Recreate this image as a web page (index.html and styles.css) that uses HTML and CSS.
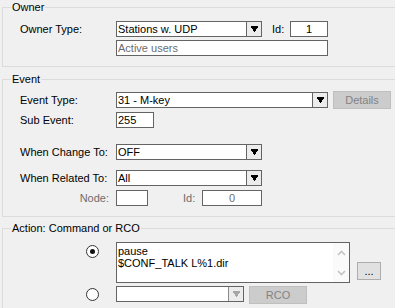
FILE: index.html
```html
<!DOCTYPE html>
<html>
<head>
<meta charset="utf-8">
<link rel="stylesheet" href="styles.css">
</head>
<body>
<div class="page">
  <div class="group owner">
    <span class="legend">Owner</span>
    <div class="row">
      <span class="lbl">Owner Type:</span>
      <div class="combo w146"><span class="val">Stations w. UDP</span><span class="btn"><svg width="7" height="6" viewBox="0 0 7 6"><path d="M0 0h7v2h-1v1h-1v2h-1v1h-1v-1h-1v-2h-1v-1h-1z" fill="#000"/></svg></span></div>
      <span class="idlbl">Id:</span>
      <div class="box w38 center">1</div>
    </div>
    <div class="row mt3">
      <span class="lbl"></span>
      <div class="box w212 grey">Active users</div>
    </div>
  </div>

  <div class="group event">
    <span class="legend">Event</span>
    <div class="row">
      <span class="lbl">Event Type:</span>
      <div class="combo w212"><span class="val">31 - M-key</span><span class="btn"><svg width="7" height="6" viewBox="0 0 7 6"><path d="M0 0h7v2h-1v1h-1v2h-1v1h-1v-1h-1v-2h-1v-1h-1z" fill="#000"/></svg></span></div>
      <div class="button disabled details">Details</div>
    </div>
    <div class="row mt4">
      <span class="lbl">Sub Event:</span>
      <div class="box w38">255</div>
    </div>
    <div class="row mt16">
      <span class="lbl">When Change To:</span>
      <div class="combo w146"><span class="val">OFF</span><span class="btn"><svg width="7" height="6" viewBox="0 0 7 6"><path d="M0 0h7v2h-1v1h-1v2h-1v1h-1v-1h-1v-2h-1v-1h-1z" fill="#000"/></svg></span></div>
    </div>
    <div class="row mt10">
      <span class="lbl">When Related To:</span>
      <div class="combo w146"><span class="val">All</span><span class="btn"><svg width="7" height="6" viewBox="0 0 7 6"><path d="M0 0h7v2h-1v1h-1v2h-1v1h-1v-1h-1v-2h-1v-1h-1z" fill="#000"/></svg></span></div>
    </div>
    <div class="row mt4">
      <span class="lbl right grey">Node:</span>
      <div class="box w32"></div>
      <span class="idlbl2 grey">Id:</span>
      <div class="box w60 center grey">0</div>
    </div>
  </div>

  <div class="group action">
    <span class="legend">Action: Command or RCO</span>
    <div class="arow">
      <span class="radio checked"></span>
      <div class="memo">
        <div class="memotext">pause<br>$CONF_TALK L%1.dir</div>
        <div class="scroll">
          <svg width="9" height="6" viewBox="0 0 9 6"><path d="M1 5L4.5 1.5L8 5" fill="none" stroke="#c4c4c4" stroke-width="1.6"/></svg>
          <svg width="9" height="6" viewBox="0 0 9 6"><path d="M1 1L4.5 4.5L8 1" fill="none" stroke="#c4c4c4" stroke-width="1.6"/></svg>
        </div>
      </div>
      <div class="button dots">...</div>
    </div>
    <div class="arow mt3">
      <span class="radio r2"></span>
      <div class="combo w128 dis"><span class="val"></span><span class="btn"><svg width="7" height="6" viewBox="0 0 7 6"><path d="M0 0h7v2h-1v1h-1v2h-1v1h-1v-1h-1v-2h-1v-1h-1z" fill="#a6a6a6"/></svg></span></div>
      <div class="button disabled rco">RCO</div>
    </div>
  </div>
</div>
</body>
</html>
```

FILE: styles.css
```css
html, body {
  margin: 0;
  padding: 0;
  background: #f0f0f0;
}
body {
  width: 395px;
  height: 308px;
  overflow: hidden;
  font-family: "Liberation Sans", Arial, sans-serif;
  font-size: 11px;
  line-height: 13px;
  color: #000;
}
.page {
  display: flex;
  flex-direction: column;
}
.group {
  position: relative;
  margin-left: 2px;
  width: 393px;
  box-sizing: border-box;
  border: 1px solid #dcdcdc;
  border-right: none;
}
.legend {
  position: absolute;
  top: -7px;
  left: 8px;
  padding: 0 1px;
  background: #f0f0f0;
  white-space: nowrap;
}
.owner {
  margin-top: 7px;
  padding: 13px 0 10px 0;
}
.event {
  margin-top: 12px;
  padding: 12px 0 10px 0;
}
.action {
  margin-top: 11px;
  padding: 13px 0 5px 0;
  border-bottom: none;
}
.row {
  display: flex;
  align-items: center;
  height: 16px;
  padding-left: 17px;
}
.arow {
  display: flex;
  align-items: flex-start;
  padding-left: 83px;
}
.mt3 { margin-top: 3px; }
.mt4 { margin-top: 4px; }
.mt10 { margin-top: 10px; }
.mt16 { margin-top: 16px; }
.lbl {
  width: 96px;
  flex: none;
  white-space: nowrap;
}
.lbl.right {
  text-align: right;
  padding-right: 7px;
  box-sizing: border-box;
}
.grey { color: #6d6d6d; }
.combo {
  display: flex;
  box-sizing: border-box;
  height: 16px;
  border: 1px solid #646464;
  background: #fff;
  flex: none;
}
.combo .val {
  flex: 1;
  padding-left: 1px;
  line-height: 14px;
  white-space: nowrap;
  overflow: hidden;
}
.combo .btn {
  width: 15px;
  box-sizing: border-box;
  border-left: 1px solid #646464;
  background: #ececec;
  display: flex;
  align-items: center;
  justify-content: center;
}
.combo .btn svg { display: block; }
.combo.dis .btn { border-left-color: #8a8a8a; }
.w128 { width: 128px; }
.w146 { width: 146px; }
.w212 { width: 212px; }
.w38 { width: 38px; }
.w32 { width: 32px; }
.w60 { width: 60px; }
.box {
  box-sizing: border-box;
  height: 16px;
  border: 1px solid #646464;
  background: #fff;
  padding-left: 1px;
  line-height: 14px;
  flex: none;
  white-space: nowrap;
}
.box.center {
  text-align: center;
  padding-left: 0;
}
.idlbl {
  margin-left: 10px;
  width: 18px;
  flex: none;
}
.idlbl2 {
  margin-left: 35px;
  width: 19px;
  flex: none;
}
.button {
  box-sizing: border-box;
  border: 1px solid #adadad;
  background: #e1e1e1;
  text-align: center;
  flex: none;
}
.button.disabled {
  border-color: #bfbfbf;
  background: #cccccc;
  color: #838383;
}
.details {
  margin-left: 5px;
  width: 58px;
  height: 18px;
  line-height: 16px;
}
.radio {
  box-sizing: border-box;
  width: 13px;
  height: 13px;
  border: 1px solid #333;
  border-radius: 50%;
  background: #fff;
  margin-top: 3px;
  margin-right: 17px;
  flex: none;
  display: flex;
  align-items: center;
  justify-content: center;
}
.radio.checked::after {
  content: "";
  width: 5px;
  height: 5px;
  border-radius: 50%;
  background: #111;
}
.radio.r2 { margin-top: 2px; }
.memo {
  box-sizing: border-box;
  width: 234px;
  height: 41px;
  border: 1px solid #646464;
  background: #fff;
  display: flex;
  flex: none;
}
.memotext {
  flex: 1;
  padding: 2px 0 0 1px;
  line-height: 12px;
  white-space: nowrap;
}
.scroll {
  width: 16px;
  background: #fafafa;
  display: flex;
  flex-direction: column;
  align-items: center;
  justify-content: space-between;
  padding: 7px 0 6px 0;
  box-sizing: border-box;
}
.scroll svg { display: block; }
.dots {
  margin-left: 7px;
  margin-top: 20px;
  width: 24px;
  height: 18px;
  line-height: 16px;
}
.rco {
  margin-left: 5px;
  width: 58px;
  height: 18px;
  line-height: 16px;
}
```
